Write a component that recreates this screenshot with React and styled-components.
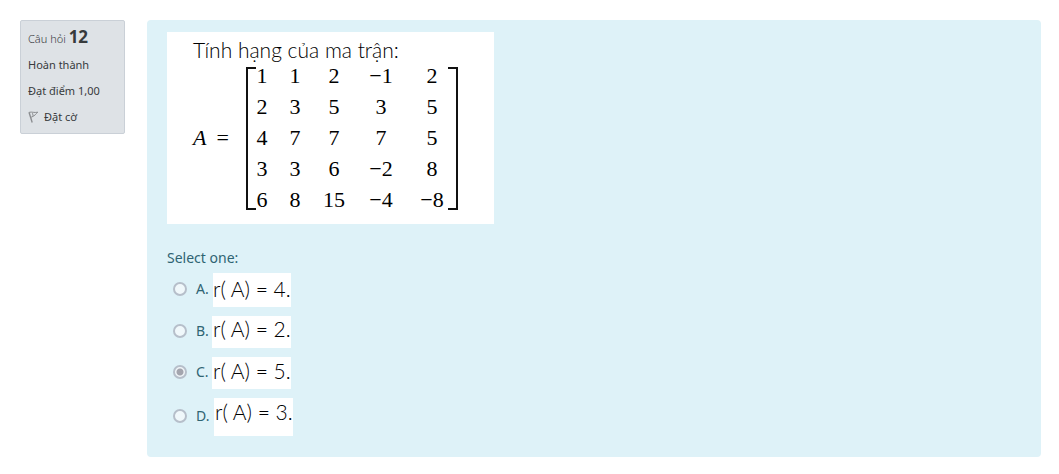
import React, { useState } from 'react';
import styled, { createGlobalStyle } from 'styled-components';

const GlobalStyle = createGlobalStyle`
  * { box-sizing: border-box; }
  body {
    margin: 0;
    background: #fff;
    font-family: "Noto Sans", "Open Sans", sans-serif;
  }
`;

const Question = styled.main`
  display: flex;
  align-items: flex-start;
  gap: 22px;
  padding: 20px 18px 17px 20px;
`;

const Info = styled.aside`
  flex: none;
  width: 105px;
  padding: 3px 7px;
  border: 1px solid #cad0d7;
  border-radius: 2px;
  background: #dee2e6;
  color: #373a3c;
  font-size: 11px;
  line-height: 26px;
  white-space: nowrap;
`;

const Heading = styled.h3`
  margin: 0;
  font-size: 11px;
  line-height: 26px;
  font-weight: 300;
`;

const Number = styled.span`
  font-size: 17px;
  font-weight: 700;
`;

const InfoLine = styled.div`
  height: 26px;
`;

const FlagButton = styled.button`
  display: flex;
  align-items: center;
  gap: 5px;
  padding: 0;
  border: 0;
  background: none;
  color: inherit;
  font: inherit;
  cursor: pointer;
`;

const Content = styled.section`
  flex: 1;
  min-width: 0;
  padding: 12px 20px 21px;
  border-radius: 4px;
  background: #def2f8;
  color: #2f6473;
`;

const Problem = styled.div`
  width: fit-content;
  padding: 8px 36px 9px 26px;
  background: #fff;
  color: #000;
`;

const ProblemTitle = styled.p`
  margin: 0;
  font: 300 21px/20px Lato, sans-serif;
  white-space: nowrap;
`;

const Formula = styled.div`
  display: flex;
  align-items: center;
  font: 22px/31px "Liberation Serif", serif;
`;

const Lhs = styled.span`
  display: flex;
  gap: 10px;
  width: 53px;
`;

const Brackets = styled.div`
  position: relative;

  &::before,
  &::after {
    content: "";
    position: absolute;
    top: 7px;
    bottom: 5px;
    width: 8px;
    border: 2px solid #111;
  }
  &::before { left: 0; border-right: 0; }
  &::after { right: 0; border-left: 0; }
`;

const Matrix = styled.table`
  width: 212px;
  table-layout: fixed;
  border-collapse: collapse;
`;

const Col = styled.col`
  width: ${(p) => p.$width}px;
`;

const Cell = styled.td`
  height: 31px;
  padding: 0;
  text-align: center;
  white-space: nowrap;
`;

const Answers = styled.fieldset`
  display: flex;
  flex-direction: column;
  gap: 9px;
  min-width: 0;
  margin: 0;
  padding: 0;
  border: 0;
`;

const Prompt = styled.legend`
  padding: 24px 0 5px;
  font-size: 14px;
  line-height: 20px;
`;

const Option = styled.label`
  display: flex;
  align-items: center;
  width: fit-content;
  padding-left: 6px;
  font-size: 14px;
  line-height: 20px;
  cursor: pointer;
`;

const Radio = styled.input`
  appearance: none;
  flex: none;
  width: 14px;
  height: 14px;
  margin: 0 9px 2px 0;
  border: 2px solid #b6bfca;
  border-radius: 50%;
  background: #f0f8fb;

  &:checked {
    background: radial-gradient(circle, #a3a5ae 0 3px, #f0f5f8 4px);
  }
`;

const Letter = styled.span`
  width: ${(p) => p.$width}px;
  padding-bottom: 3px;
`;

const Value = styled.span`
  width: ${(p) => p.$width}px;
  height: ${(p) => p.$height}px;
  padding-left: ${(p) => p.$indent}px;
  background: #fff;
  color: #000;
  font: 300 21px/${(p) => p.$line}px Lato, sans-serif;
  white-space: pre;
`;

const columns = [32, 34, 44, 50, 52];
const rows = [
  ['1', '1', '2', '−1', '2'],
  ['2', '3', '5', '3', '5'],
  ['4', '7', '7', '7', '5'],
  ['3', '3', '6', '−2', '8'],
  ['6', '8', '15', '−4', '−8'],
];

const options = [
  { id: 'A', text: 'r( A) = 4.', width: 78, height: 34, line: 32, indent: 0, letter: 17 },
  { id: 'B', text: 'r( A) = 2.', width: 79, height: 32, line: 26, indent: 1, letter: 16 },
  { id: 'C', text: 'r( A) = 5.', width: 79, height: 32, line: 28, indent: 1, letter: 16 },
  { id: 'D', text: 'r( A) = 3.', width: 79, height: 38, line: 28, indent: 1, letter: 18 },
];

function FlagIcon() {
  return (
    <svg width="11" height="12" viewBox="0 0 11 12" fill="none" stroke="#8b8d90" aria-hidden="true">
      <path d="M1 1.2 4.2 11.5" strokeWidth="1.4" />
      <path d="M1.2 1.3C4 .6 6 2 9.8 1.2 8 2.6 7 5 3.2 6.2M4.5 2.2 5.2 5" />
    </svg>
  );
}

export default function App() {
  const [selected, setSelected] = useState('C');
  return (
    <>
      <GlobalStyle />
      <Question>
        <Info>
          <Heading>Câu hỏi <Number>12</Number></Heading>
          <InfoLine>Hoàn thành</InfoLine>
          <InfoLine>Đạt điểm 1,00</InfoLine>
          <FlagButton type="button"><FlagIcon />Đặt cờ</FlagButton>
        </Info>
        <Content>
          <Problem>
            <ProblemTitle>Tính hạng của ma trận:</ProblemTitle>
            <Formula>
              <Lhs><i>A</i><span>=</span></Lhs>
              <Brackets>
                <Matrix>
                  <colgroup>{columns.map((w, i) => <Col key={i} $width={w} />)}</colgroup>
                  <tbody>
                    {rows.map((row, r) => (
                      <tr key={r}>{row.map((v, c) => <Cell key={c}>{v}</Cell>)}</tr>
                    ))}
                  </tbody>
                </Matrix>
              </Brackets>
            </Formula>
          </Problem>
          <Answers>
            <Prompt>Select one:</Prompt>
            {options.map((o) => (
              <Option key={o.id}>
                <Radio
                  type="radio"
                  name="answer"
                  value={o.id}
                  checked={selected === o.id}
                  onChange={() => setSelected(o.id)}
                />
                <Letter $width={o.letter}>{o.id}.</Letter>
                <Value $width={o.width} $height={o.height} $line={o.line} $indent={o.indent}>{o.text}</Value>
              </Option>
            ))}
          </Answers>
        </Content>
      </Question>
    </>
  );
}
